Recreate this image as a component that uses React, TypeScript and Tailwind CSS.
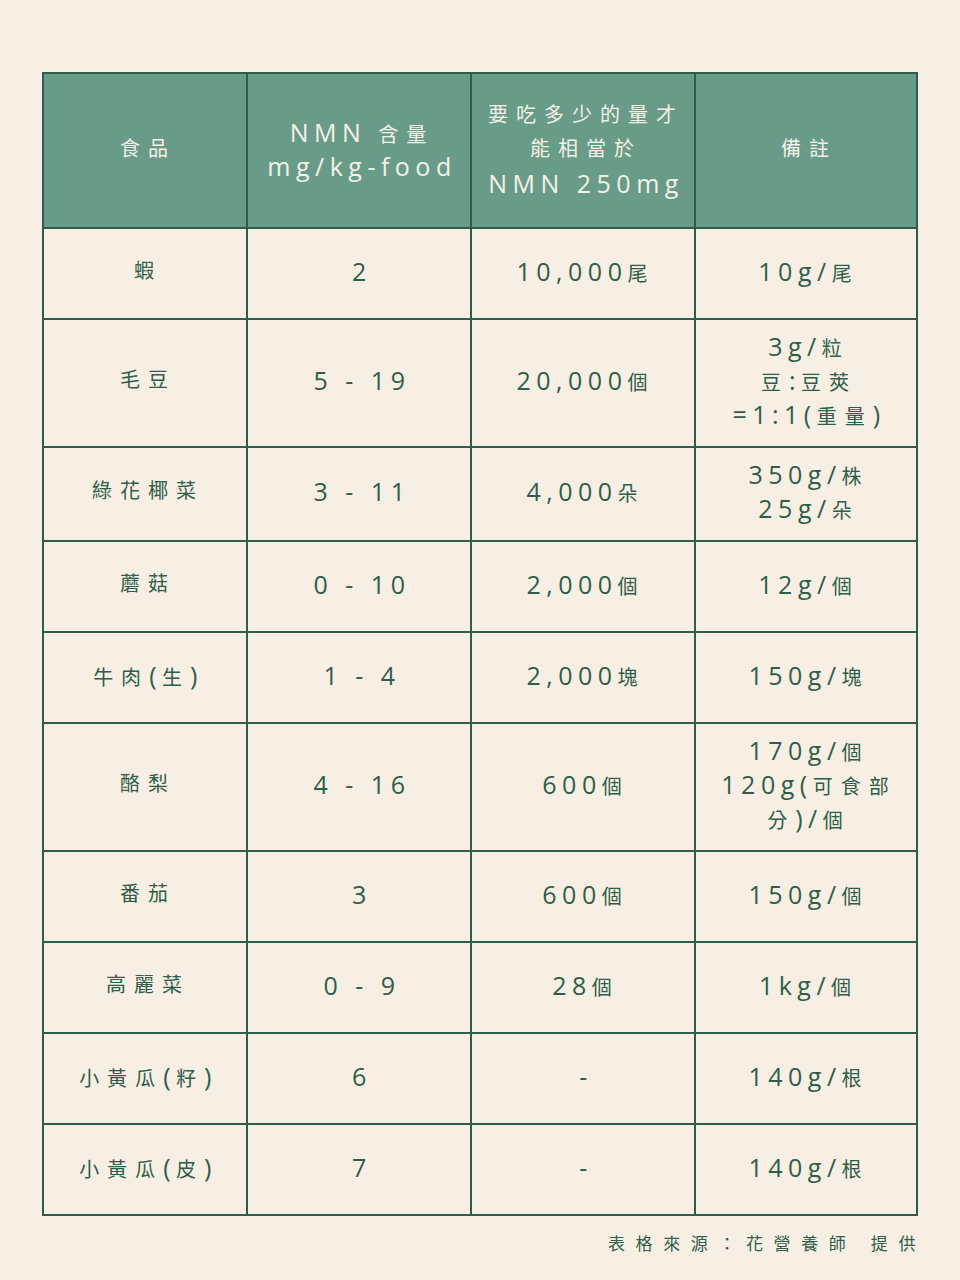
import React from "react";

const rows: { food: string; amount: string; need: string; note: string[] }[] = [
  { food: "蝦", amount: "2", need: "10,000尾", note: ["10g/尾"] },
  { food: "毛豆", amount: "5 - 19", need: "20,000個", note: ["3g/粒", "豆:豆莢", "=1:1(重量)"] },
  { food: "綠花椰菜", amount: "3 - 11", need: "4,000朵", note: ["350g/株", "25g/朵"] },
  { food: "蘑菇", amount: "0 - 10", need: "2,000個", note: ["12g/個"] },
  { food: "牛肉(生)", amount: "1 - 4", need: "2,000塊", note: ["150g/塊"] },
  { food: "酪梨", amount: "4 - 16", need: "600個", note: ["170g/個", "120g(可食部", "分)/個"] },
  { food: "番茄", amount: "3", need: "600個", note: ["150g/個"] },
  { food: "高麗菜", amount: "0 - 9", need: "28個", note: ["1kg/個"] },
  { food: "小黃瓜(籽)", amount: "6", need: "-", note: ["140g/根"] },
  { food: "小黃瓜(皮)", amount: "7", need: "-", note: ["140g/根"] },
];

// CJK glyphs sit smaller than the latin ones in the source, so split runs
function Mixed({ text }: { text: string }) {
  const parts = text.match(/[\u3000-\u9fff\uff00-\uffef]+|[^\u3000-\u9fff\uff00-\uffef]+/g) ?? [];
  return (
    <div className="leading-[34px] h-[34px]">
      {parts.map((p, i) =>
        /[\u3000-\u9fff\uff00-\uffef]/.test(p) ? (
          <span key={i} className="text-[20px] tracking-[8px]">
            {p}
          </span>
        ) : (
          <span key={i} className="text-[25px] tracking-[5.5px]">
            {p}
          </span>
        )
      )}
    </div>
  );
}

function Cell({ lines, head }: { lines: string[]; head?: boolean }) {
  return (
    <div
      className={
        head
          ? "flex flex-col items-center justify-center h-[153px] pb-[4px] bg-[#699c88] text-[#f4f1e8] pl-[14px] pr-[8px] text-center whitespace-nowrap"
          : "flex flex-col items-center justify-center min-h-[89px] pt-[9px] pb-[15px] bg-[#f7efe3] text-[#2e5e49] pl-[14px] pr-[8px] text-center whitespace-nowrap"
      }
    >
      {lines.map((l, i) => (
        <Mixed key={i} text={l} />
      ))}
    </div>
  );
}

export default function App() {
  return (
    <div
      className="min-h-[1280px] w-[960px] bg-[#f7efe3] pt-[72px] pl-[42px]"
      style={{ fontFamily: '"Open Sans", "Noto Sans CJK TC", sans-serif' }}
    >
      <div className="grid w-[876px] grid-cols-[202px_222px_222px_220px] gap-[2px] bg-[#2e5e49] p-[2px]">
        <Cell head lines={["食品"]} />
        <Cell head lines={["NMN 含量", "mg/kg-food"]} />
        <Cell head lines={["要吃多少的量才", "能相當於", "NMN 250mg"]} />
        <Cell head lines={["備註"]} />

        {rows.map((r) => (
          <React.Fragment key={r.food}>
            <Cell lines={[r.food]} />
            <Cell lines={[r.amount]} />
            <Cell lines={[r.need]} />
            <Cell lines={r.note} />
          </React.Fragment>
        ))}
      </div>

      <div
        className="mt-[12px] w-[884px] text-right text-[17px] leading-[30px] tracking-[10.6px] text-[#2e5e49]"
        style={{ fontFamily: '"Noto Sans CJK TC", sans-serif' }}
      >
        表格來源：花營養師 提供
      </div>
    </div>
  );
}
